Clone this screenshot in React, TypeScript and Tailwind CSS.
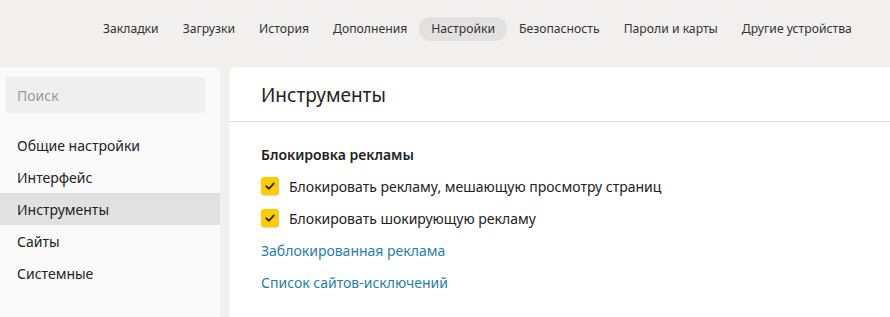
import React from "react";

const nav = ["Закладки", "Загрузки", "История", "Дополнения", "Настройки", "Безопасность", "Пароли и карты", "Другие устройства"];
const side = ["Общие настройки", "Интерфейс", "Инструменты", "Сайты", "Системные"];

function Check() {
  return (
    <span className="flex h-[18px] w-[18px] items-center justify-center rounded-[3px] bg-[#ffcc00] shadow-[0_1px_1px_rgba(0,0,0,0.15)]">
      <svg width="12" height="12" viewBox="0 0 12 12" fill="none">
        <path d="M2.2 6.2 L4.9 8.8 L9.8 3.4" stroke="#3a2a10" strokeWidth="1.9" strokeLinecap="round" strokeLinejoin="round" />
      </svg>
    </span>
  );
}

export default function App() {
  return (
    <div className="flex h-[317px] w-[890px] flex-col overflow-hidden bg-[#f1f0ef] text-[14px] text-[#222]" style={{ fontFamily: '"Segoe UI", "Noto Sans", "Open Sans", sans-serif' }}>
      <div className="flex h-[67px] items-start pl-[91px] pt-[17px]">
        {nav.map((n) => (
          <span key={n} className={`flex h-[24px] items-center whitespace-nowrap rounded-full px-[12px] text-[12.2px] text-[#333] ${n === "Настройки" ? "bg-[#e2e1e0]" : ""}`}>{n}</span>
        ))}
      </div>
      <div className="flex flex-1 gap-[9px]">
        <div className="flex w-[220px] flex-col rounded-tr-[6px] bg-[#fafafa] pt-[10px]">
          <div className="mx-[6px] flex h-[36px] w-[199px] items-center rounded-[2px] bg-[#efefef] pl-[11px] text-[#9a9a9a]">Поиск</div>
          <div className="mt-[16px] flex flex-col">
            {side.map((s) => (
              <div key={s} className={`flex h-[32px] items-center pl-[17px] ${s === "Инструменты" ? "bg-[#e1e1e1]" : ""}`}>{s}</div>
            ))}
          </div>
        </div>
        <div className="flex flex-1 flex-col rounded-tl-[8px] bg-white">
          <div className="flex h-[55px] items-center border-b border-[#dcdcdc] pl-[32px] pt-[2px] text-[19px] text-[#222]">Инструменты</div>
          <div className="flex flex-col pl-[32px] pt-[22px]">
            <div className="h-[22px] font-semibold leading-[22px]">Блокировка рекламы</div>
            <div className="mt-[9px] flex h-[22px] items-center gap-[10px]"><Check />Блокировать рекламу, мешающую просмотру страниц</div>
            <div className="mt-[10px] flex h-[22px] items-center gap-[10px]"><Check />Блокировать шокирующую рекламу</div>
            <div className="mt-[11px] h-[22px] leading-[22px] text-[#1f80ad]">Заблокированная реклама</div>
            <div className="mt-[10px] h-[22px] leading-[22px] text-[#1f80ad]">Список сайтов-исключений</div>
          </div>
        </div>
      </div>
    </div>
  );
}
